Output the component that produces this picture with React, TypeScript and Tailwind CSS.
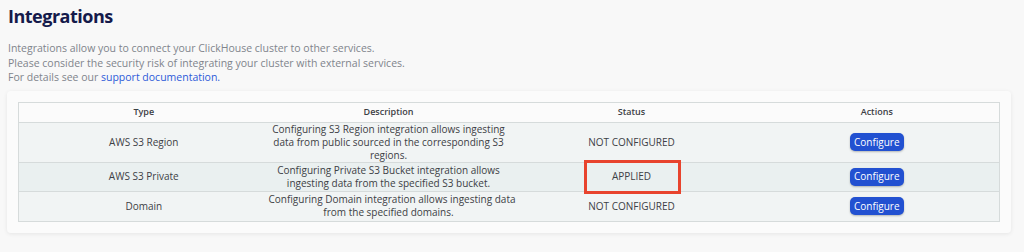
/**
 * Integrations - list of cluster integrations with their status
 */

const rows = [
    {
        type: 'AWS S3 Region',
        lines: [
            'Configuring S3 Region integration allows ingesting',
            'data from public sourced in the corresponding S3',
            'regions.',
        ],
        status: 'NOT CONFIGURED',
        height: 'h-[40px]',
        bg: 'bg-[#f1f4f4]',
    },
    {
        type: 'AWS S3 Private',
        lines: [
            'Configuring Private S3 Bucket integration allows',
            'ingesting data from the specified S3 bucket.',
        ],
        status: 'APPLIED',
        height: 'h-[29px]',
        bg: 'bg-[#eaf0f0]',
        marked: true,
    },
    {
        type: 'Domain',
        lines: [
            'Configuring Domain integration allows ingesting data',
            'from the specified domains.',
        ],
        status: 'NOT CONFIGURED',
        height: 'h-[30px]',
        bg: 'bg-[#f1f4f4]',
    },
];

export default function App() {
    return (
        <div className="h-[252px] w-[1024px] overflow-hidden bg-[#f8f8f8] font-['Open_Sans',sans-serif]">
            {/* Header */}
            <div className="px-2 pt-[4px]">
                <h1 className="text-[18px] font-bold leading-[24px] tracking-[-0.5px] text-[#141a4b]">
                    Integrations
                </h1>
                <div className="mt-[13px] text-[10.5px] leading-[14.5px] text-[#80848c]">
                    <p>Integrations allow you to connect your ClickHouse cluster to other services.</p>
                    <p>Please consider the security risk of integrating your cluster with external services.</p>
                    <p>
                        For details see our{' '}
                        <span className="text-[#2d5ad8]">support documentation.</span>
                    </p>
                </div>
            </div>

            {/* Card */}
            <div className="ml-[7px] mt-[6px] w-[1004px] rounded-[4px] bg-[#fbfbfb] px-[11px] py-[11px] shadow-[0_1px_4px_rgba(0,0,0,0.08)]">
                <table className="w-[981px] table-fixed border-collapse border border-[#d6dbdb] text-[10px] text-[#3d4045]">
                    <colgroup>
                        <col className="w-[250px]" />
                        <col className="w-[240px]" />
                        <col className="w-[246px]" />
                        <col className="w-[245px]" />
                    </colgroup>
                    <thead>
                        <tr className="h-[20px] bg-[#fbfbfb]">
                            <th className="text-[9px] font-semibold">Type</th>
                            <th className="text-[9px] font-semibold">Description</th>
                            <th className="text-[9px] font-semibold">Status</th>
                            <th className="text-[9px] font-semibold">Actions</th>
                        </tr>
                    </thead>
                    <tbody>
                        {rows.map((row) => (
                            <tr key={row.type} className={`${row.height} ${row.bg} border-t border-[#d6dbdb]`}>
                                <td className="text-center">{row.type}</td>
                                <td className="whitespace-nowrap text-center leading-[13px]">
                                    {row.lines.map((line) => (
                                        <div key={line}>{line}</div>
                                    ))}
                                </td>
                                <td className="relative text-center">
                                    {row.status}
                                    {row.marked && (
                                        <div className="absolute left-[75px] top-[-3px] h-[34px] w-[97px] border-[3px] border-[#e8432d]" />
                                    )}
                                </td>
                                <td className="text-center">
                                    <button className="h-[18px] w-[54px] rounded-[5px] bg-[#2251d1] text-[10px] text-white shadow-[0_1px_2px_rgba(0,0,0,0.25)]">
                                        Configure
                                    </button>
                                </td>
                            </tr>
                        ))}
                    </tbody>
                </table>
            </div>
        </div>
    );
}
